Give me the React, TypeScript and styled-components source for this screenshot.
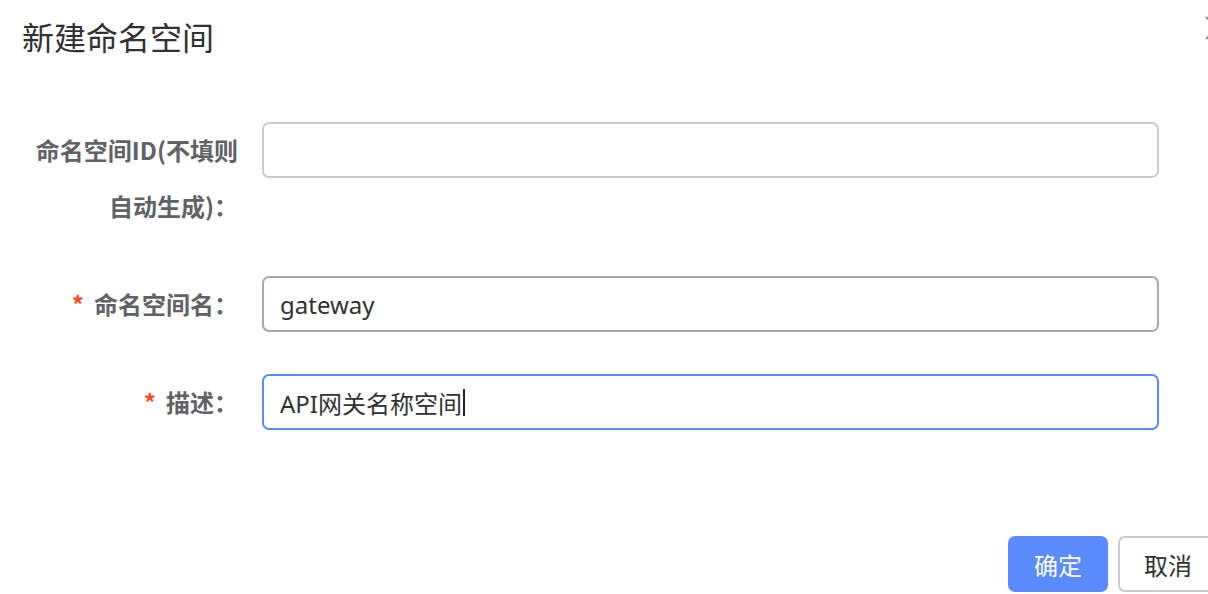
import React from "react";
import styled, { createGlobalStyle, css } from "styled-components";

const Global = createGlobalStyle`
  html, body { margin: 0; padding: 0; background: #fff; overflow: hidden; }
  body { font-family: "Noto Sans", "Noto Sans CJK SC", sans-serif; }
`;

const Dialog = styled.div`
  position: relative;
  width: 1240px;
  height: 594px;
  background: #fff;
  display: flex;
  flex-direction: column;
`;

const Header = styled.header`
  padding: 12px 22px 0 22px;
  height: 62px;
  box-sizing: border-box;
`;

const Title = styled.h2`
  margin: 0;
  font-family: "Noto Sans CJK SC", sans-serif;
  font-size: 32px;
  font-weight: 400;
  line-height: 48px;
  color: #303133;
`;

const CloseButton = styled.button`
  position: absolute;
  left: 1205px;
  top: 16px;
  width: 24px;
  height: 24px;
  padding: 0;
  border: none;
  background: transparent;
  color: #909399;
  display: flex;
`;

const Form = styled.form`
  width: 1159px;
  padding-top: 60px;
  display: flex;
  flex-direction: column;
  gap: 42px;
`;

const Item = styled.div`
  display: grid;
  grid-template-columns: 238px 1fr;
  column-gap: 24px;
  align-items: start;
`;

const Label = styled.label<{ $required?: boolean }>`
  box-sizing: border-box;
  padding-left: 24px;
  font-family: "Noto Sans CJK SC", sans-serif;
  font-size: 24px;
  font-weight: 700;
  line-height: 56px;
  color: #606266;
  text-align: right;
  ${(p) =>
    p.$required &&
    css`
      &::before {
        content: "*";
        color: #fa4b1b;
        margin-right: 10px;
        font-weight: 700;
      }
    `}
`;

type FieldState = "idle" | "hover" | "focus";

const fieldBorder: Record<FieldState, string> = {
  idle: "#c9cbd2",
  hover: "#a5a8b0",
  focus: "#5b8cff",
};

const Field = styled.div<{ $state: FieldState }>`
  height: 56px;
  box-sizing: border-box;
  border: 2px solid ${(p) => fieldBorder[p.$state]};
  border-radius: 7px;
  padding: 0 16px;
  display: flex;
  align-items: center;
  font-family: "Noto Sans", "Noto Sans CJK SC", sans-serif;
  font-size: 24px;
  color: #303133;
  background: #fff;
`;

const Caret = styled.span`
  display: inline-block;
  width: 2px;
  height: 27px;
  background: #222;
  margin-left: 1px;
`;

const Footer = styled.footer`
  margin-top: 106px;
  padding-right: 22px;
  display: flex;
  justify-content: flex-end;
  gap: 10px;
`;

const Button = styled.button<{ $primary?: boolean }>`
  width: 100px;
  height: 56px;
  box-sizing: border-box;
  border-radius: 7px;
  font-family: "Noto Sans CJK SC", sans-serif;
  font-size: 24px;
  cursor: pointer;
  ${(p) =>
    p.$primary
      ? css`
          background: #5a8bff;
          border: 2px solid #5a8bff;
          color: #fff;
        `
      : css`
          background: #fff;
          border: 2px solid #c9cbd2;
          color: #303133;
        `}
`;

export default function App() {
  return (
    <>
      <Global />
      <Dialog>
        <Header>
          <Title>新建命名空间</Title>
        </Header>
        <CloseButton aria-label="关闭">
          <svg width="24" height="24" viewBox="0 0 24 24">
            <path d="M1 1 L23 23 M23 1 L1 23" stroke="currentColor" strokeWidth="2" fill="none" />
          </svg>
        </CloseButton>
        <Form>
          <Item>
            <Label>命名空间ID(不填则自动生成)：</Label>
            <Field $state="idle" />
          </Item>
          <Item>
            <Label $required>命名空间名：</Label>
            <Field $state="hover">gateway</Field>
          </Item>
          <Item>
            <Label $required>描述：</Label>
            <Field $state="focus">
              API网关名称空间
              <Caret />
            </Field>
          </Item>
        </Form>
        <Footer>
          <Button $primary>确定</Button>
          <Button>取消</Button>
        </Footer>
      </Dialog>
    </>
  );
}
